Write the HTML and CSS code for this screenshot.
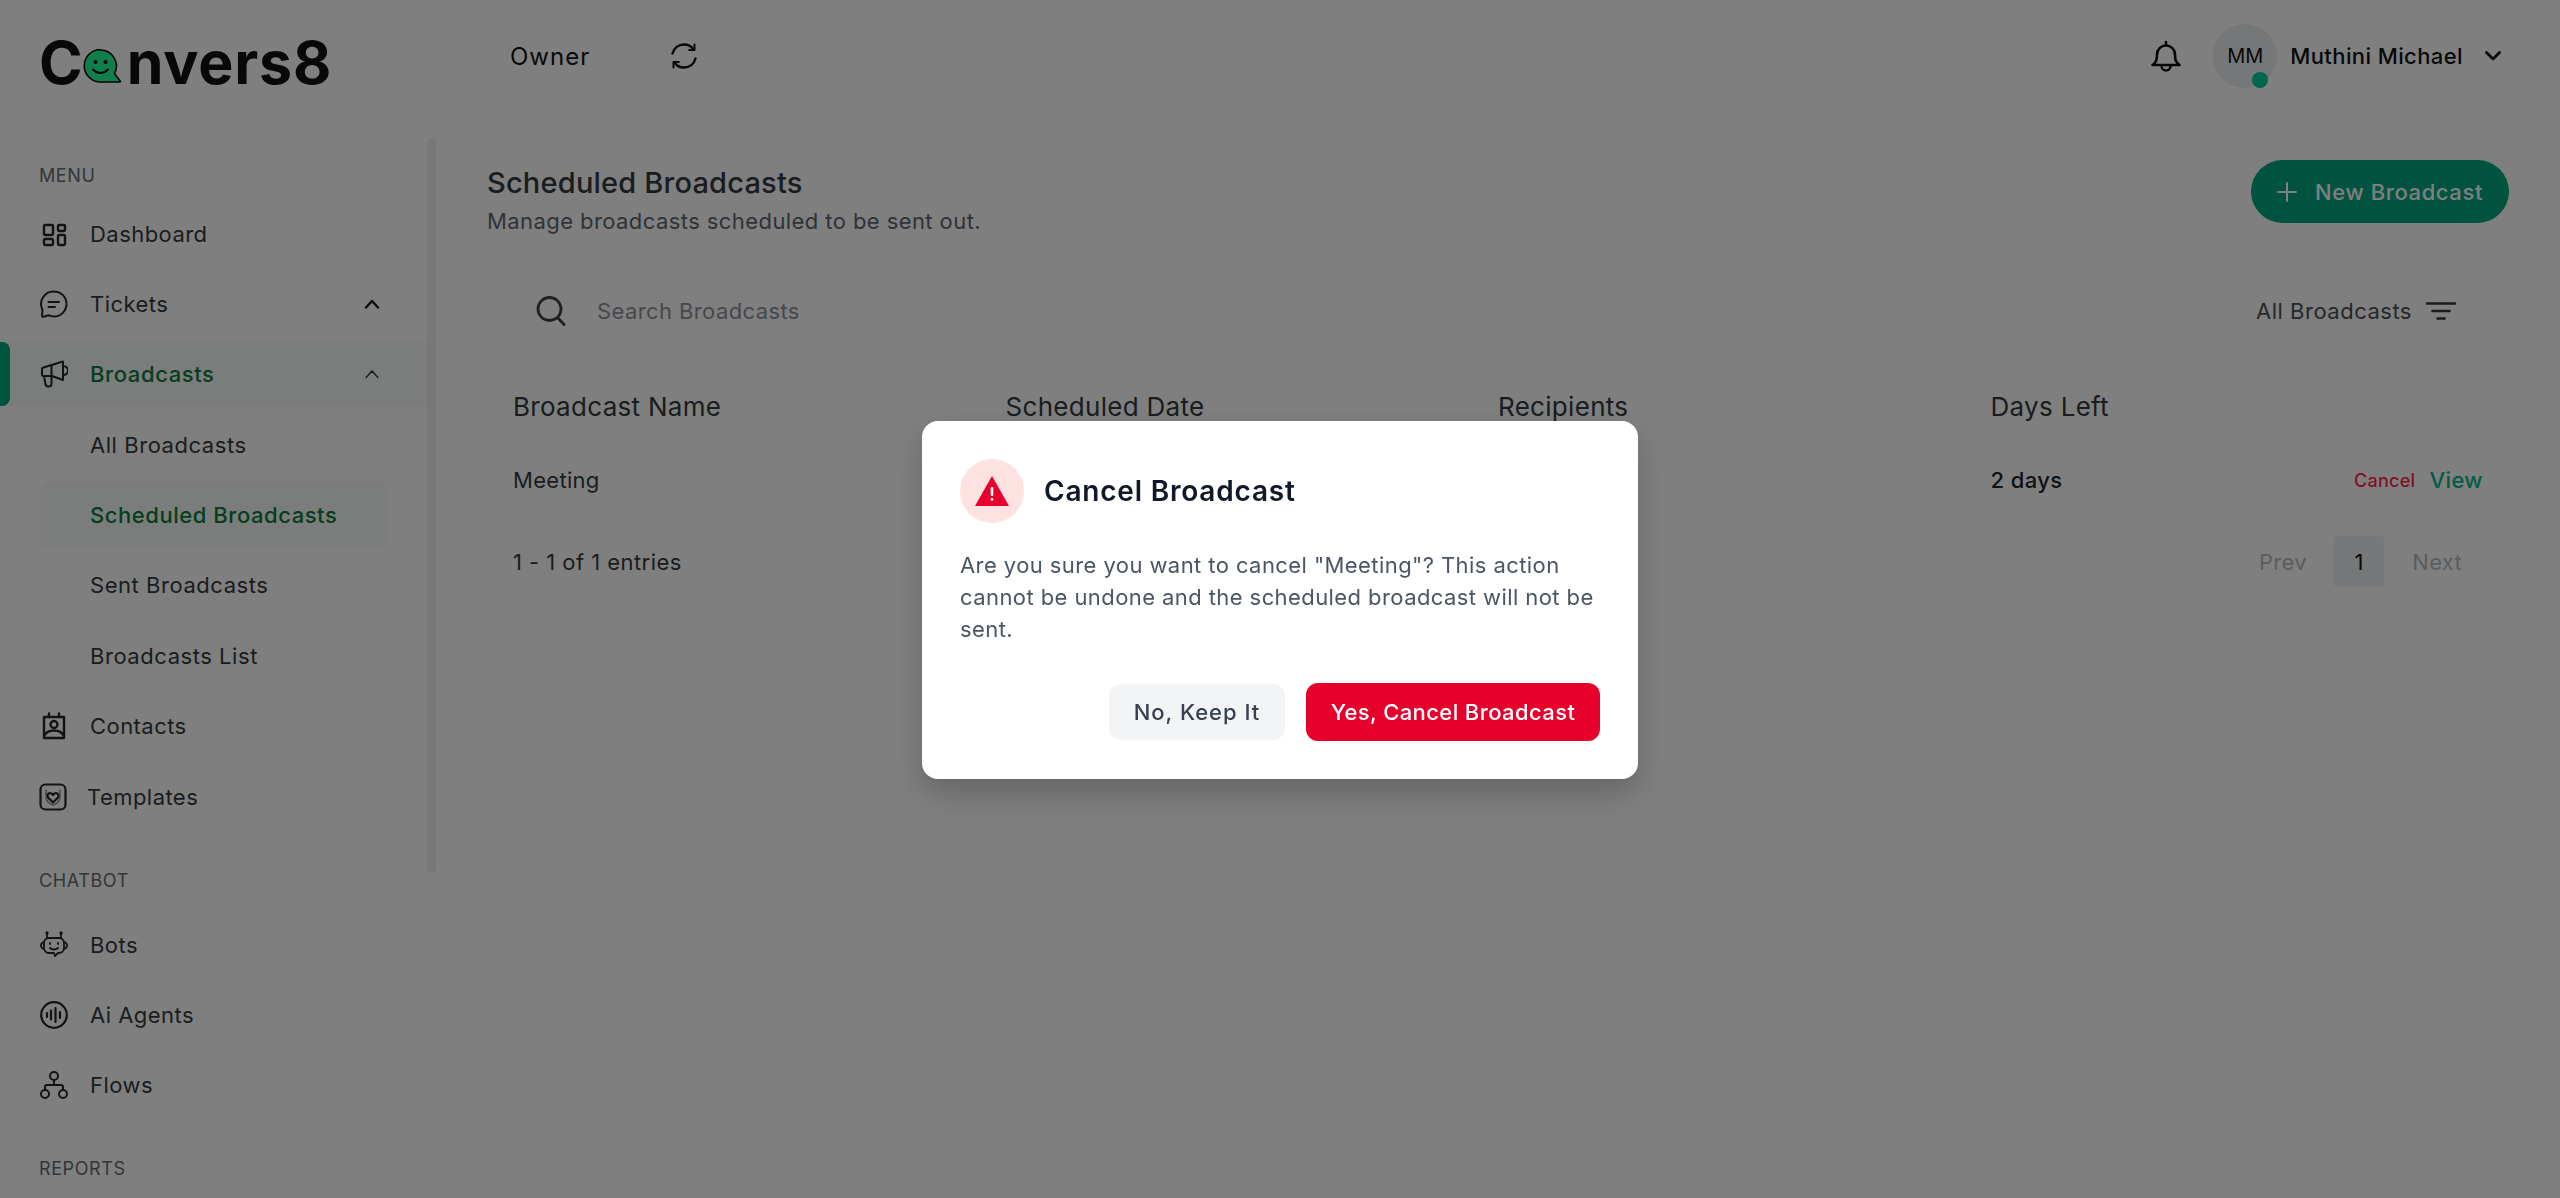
FILE: index.html
```html
<!DOCTYPE html>
<html lang="en">
<head>
<meta charset="utf-8">
<title>Scheduled Broadcasts</title>
<link rel="stylesheet" href="styles.css">
</head>
<body>
<div class="app">
  <header class="topbar">
    <div class="logo-cell">
      <div class="logo"><span class="logo-c">C</span><svg class="logo-mark" viewBox="0 0 38 34"><path d="M17 1a16 16 0 0 1 14 23.500l6 8-1 .5H17a16 16 0 0 1 0-32.500z" fill="#20ff96" stroke="#0a0a0a" stroke-width="1.600" stroke-linejoin="round"/><circle cx="12" cy="13" r="2" fill="#0a0a0a"/><circle cx="22" cy="13" r="2" fill="#0a0a0a"/><path d="M9.500 20.500c4 4.500 11 4.500 15 0" fill="none" stroke="#0a0a0a" stroke-width="2" stroke-linecap="round"/></svg><span class="logo-rest">nvers8</span></div>
    </div>
    <div class="role">Owner</div>
    <svg class="refresh" viewBox="0 0 28 28" fill="none" stroke="#111" stroke-width="2.400" stroke-linecap="round" stroke-linejoin="round"><path d="M2.500 11.500C4 6 8.500 2.500 14 2.500c4 0 7.500 2 9.500 5"/><path d="M24.500 2.500v5.500h-5.500" stroke-width="2"/><path d="M25.500 16.500C24 22 19.500 25.500 14 25.500c-4 0-7.500-2-9.500-5"/><path d="M3.500 25.500V20h5.500" stroke-width="2"/></svg>
    <div class="top-spacer"></div>
    <svg class="bell" viewBox="0 0 30 32" fill="none" stroke="#111" stroke-width="2.600" stroke-linecap="round" stroke-linejoin="round"><path d="M15 1.500v2.500"/><path d="M6 14a9 9 0 0 1 18 0c0 6 1 8 4.500 10.500h-27C5 22 6 20 6 14z"/><path d="M10.500 25.500a4.500 4.500 0 0 0 9 0"/></svg>
    <div class="avatar">MM<span class="status"></span></div>
    <div class="user-name">Muthini Michael</div>
    <svg class="user-chevron" viewBox="0 0 16 10" fill="none" stroke="#111" stroke-width="2.800" stroke-linecap="round" stroke-linejoin="round"><path d="M1.500 1.500 8 8l6.500-6.500"/></svg>
  </header>

  <div class="body-row">
    <aside class="sidebar">
      <span class="scroll-thumb"></span>
      <div class="side-label side-label-first">MENU</div>
      <nav class="side-group">
        <a class="side-item"><svg class="side-icon" viewBox="0 0 28 28" fill="none" stroke="#22262b" stroke-width="2.400" stroke-linejoin="round"><rect x="4" y="5" width="9" height="10" rx="1.200"/><rect x="18" y="5" width="7" height="6" rx="1.200"/><rect x="4" y="19" width="9" height="6" rx="1.200"/><rect x="18" y="15" width="7" height="10" rx="1.200"/></svg><span>Dashboard</span><svg class="side-chevron hidden-chevron" viewBox="0 0 16 10"></svg></a>
        <a class="side-item"><svg class="side-icon" viewBox="0 0 28 28" fill="none" stroke="#22262b" stroke-width="2" stroke-linecap="round" stroke-linejoin="round"><path d="M14 1.500a12.500 12.500 0 0 1 0 25c-2 0-4-.5-5.500-1.300l-5 1.500c-1 .2-1.500-.2-1.500-1l.5-6A12.500 12.500 0 0 1 14 1.500z"/><path d="M8.500 12H19M8.500 17H15"/></svg><span>Tickets</span><svg class="side-chevron" viewBox="0 0 16 10" fill="none" stroke="#15181c" stroke-width="2.400" stroke-linecap="round" stroke-linejoin="round"><path d="M2 8.500 8 2l6 6.500"/></svg></a>
        <a class="side-item side-item-active"><svg class="side-icon" viewBox="0 0 28 28" fill="none" stroke="#22262b" stroke-width="2" stroke-linecap="round" stroke-linejoin="round"><path d="M3.500 7.500 23 1.500V20L12 16H3.500C2.500 16 2 15.500 2 14.500V9c0-1 .5-1.500 1.500-1.500z"/><path d="M23 6c3 0 5 2 5 4.500S26 15 23 15"/><path d="M4 16l1.500 8c.2 1.500 1.500 2.500 3 2.500s3-1 3-2.500V5"/></svg><span>Broadcasts</span><svg class="side-chevron" viewBox="0 0 16 10" fill="none" stroke="#2a2f34" stroke-width="1.300" stroke-linecap="round" stroke-linejoin="round"><path d="M2 8.500 8 2l6 6.500"/></svg></a>
        <a class="side-sub">All Broadcasts</a>
        <a class="side-sub side-sub-active">Scheduled Broadcasts</a>
        <a class="side-sub">Sent Broadcasts</a>
        <a class="side-sub">Broadcasts List</a>
        <a class="side-item"><svg class="side-icon" viewBox="0 0 28 28" fill="none" stroke="#22262b" stroke-width="2.400" stroke-linecap="round" stroke-linejoin="round"><path d="M4 5h20v21H4z"/><path d="M9 1.500V5M19 1.500V5"/><circle cx="14" cy="12.500" r="3.500"/><path d="M4 24c2-4 5-5.500 10-5.500s8 1.500 10 5.500"/></svg><span>Contacts</span><svg class="side-chevron hidden-chevron" viewBox="0 0 16 10"></svg></a>
        <a class="side-item side-item-wide"><svg class="side-icon" viewBox="0 0 28 28" fill="none" stroke="#22262b" stroke-width="2.200" stroke-linecap="round" stroke-linejoin="round"><rect x="1.500" y="1.500" width="25" height="25" rx="5"/><path d="M7 7v6c0 5 3 8 7 9 4-1 7-4 7-9V7" stroke-width="1.400" opacity=".55"/><path d="M14 19.500l-4.500-4.500c-1.500-1.500-1.200-3.500 0-4.300s3-.4 4.500 1.300c1.500-1.700 3.300-2.100 4.500-1.300s1.500 2.800 0 4.300z"/></svg><span>Templates</span><svg class="side-chevron hidden-chevron" viewBox="0 0 16 10"></svg></a>
      </nav>
      <div class="side-label side-label-chatbot">CHATBOT</div>
      <nav class="side-group">
        <a class="side-item"><svg class="side-icon" viewBox="0 0 28 28" fill="none" stroke="#22262b" stroke-width="1.800" stroke-linecap="round" stroke-linejoin="round"><path d="M9 7h10a5 5 0 0 1 5 5v5a5 5 0 0 1-5 5h-1l-3 3-1-3H9a5 5 0 0 1-5-5v-5a5 5 0 0 1 5-5z"/><path d="M7 7 7 2M21 7V2"/><circle cx="7" cy="2" r=".8"/><circle cx="21" cy="2" r=".8"/><path d="M4 11c-2 .500-3 2-3 3.500S2 17.500 4 18M24 11c2 .500 3 2 3 3.500S26 17.500 24 18"/><path d="M10 12v1M18 12v1"/><path d="M10 17c2 2 6 2 8 0"/></svg><span>Bots</span><svg class="side-chevron hidden-chevron" viewBox="0 0 16 10"></svg></a>
        <a class="side-item"><svg class="side-icon" viewBox="0 0 28 28" fill="none" stroke="#22262b" stroke-width="2.200" stroke-linecap="round"><circle cx="14" cy="14" r="12.800"/><path d="M7 12v4M11 9.500v9M15.500 7v14M20 11v6"/></svg><span>Ai Agents</span><svg class="side-chevron hidden-chevron" viewBox="0 0 16 10"></svg></a>
        <a class="side-item"><svg class="side-icon" viewBox="0 0 28 28" fill="none" stroke="#22262b" stroke-width="2" stroke-linecap="round" stroke-linejoin="round"><circle cx="14" cy="5" r="4"/><circle cx="5" cy="23" r="4"/><circle cx="23" cy="23" r="4"/><path d="M14 9v5M5 19v-3a2 2 0 0 1 2-2h14a2 2 0 0 1 2 2v3"/></svg><span>Flows</span><svg class="side-chevron hidden-chevron" viewBox="0 0 16 10"></svg></a>
      </nav>
      <div class="side-label side-label-reports">REPORTS</div>
    </aside>

    <main class="main">
      <div class="page-head">
        <div class="page-titles">
          <h1 class="page-title">Scheduled Broadcasts</h1>
          <p class="page-sub">Manage broadcasts scheduled to be sent out.</p>
        </div>
        <button class="new-btn"><svg class="plus" viewBox="0 0 20 20" fill="none" stroke="#fff" stroke-width="2" stroke-linecap="round"><path d="M10 1v18M1 10h18"/></svg><span>New Broadcast</span></button>
      </div>
      <div class="filter-row">
        <svg class="search-icon" viewBox="0 0 30 30" fill="none" stroke="#3d4248" stroke-width="2.800" stroke-linecap="round"><circle cx="13.500" cy="13" r="11.500"/><path d="M22 22l6 6.500"/></svg>
        <span class="search-text">Search Broadcasts</span>
        <span class="filter-text">All Broadcasts</span>
        <svg class="filter-icon" viewBox="0 0 30 18" fill="none" stroke="#30343a" stroke-width="2.600" stroke-linecap="round"><path d="M1 1.500h28M6.500 9h17M11.500 16.500h7"/></svg>
      </div>
      <div class="table">
        <div class="t-head">
          <div>Broadcast Name</div><div>Scheduled Date</div><div>Recipients</div><div>Days Left</div>
        </div>
        <div class="t-row">
          <div>Meeting</div><div></div><div></div>
          <div class="t-last"><span class="days">2 days</span><span class="actions"><span class="act-cancel">Cancel</span><span class="act-view">View</span></span></div>
        </div>
        <div class="t-foot">
          <span class="entries">1 - 1 of 1 entries</span>
          <div class="pager"><span class="pg-off">Prev</span><span class="pg-num">1</span><span class="pg-off">Next</span></div>
        </div>
      </div>
    </main>
  </div>
</div>

<div class="backdrop">
  <div class="modal">
    <div class="modal-head">
      <div class="warn"><svg class="warn-icon" viewBox="0 0 34 30"><path d="M17 0 34 30H0z" fill="#e8002d"/><rect x="15.700" y="11" width="2.600" height="9" rx="1" fill="#fff"/><rect x="15.700" y="22" width="2.600" height="2.800" rx="1" fill="#fff"/></svg></div>
      <h2 class="modal-title">Cancel Broadcast</h2>
    </div>
    <p class="modal-text">Are you sure you want to cancel "Meeting"? This action<br>cannot be undone and the scheduled broadcast will not be<br>sent.</p>
    <div class="modal-actions">
      <button class="btn-keep">No, Keep It</button>
      <button class="btn-yes">Yes, Cancel Broadcast</button>
    </div>
  </div>
</div>
</body>
</html>
```
FILE: styles.css
```css
* { box-sizing: border-box; }
html, body { margin: 0; height: 100%; overflow: hidden; background: #fff; }
body { font-family: "Inter", "Liberation Sans", sans-serif; color: #343a40; font-size: 22px; }
.app { height: 1198px; display: flex; flex-direction: column; overflow: hidden; }

.topbar { height: 112px; flex: none; display: flex; align-items: center; padding-right: 59px; }
.logo-cell { width: 510px; flex: none; padding-left: 39px; padding-top: 14px; }
.logo { display: flex; align-items: center; font-weight: 700; font-size: 59px; line-height: 60px; color: #111; }
.logo-c { letter-spacing: -1px; }
.logo-mark { width: 39px; height: 34px; margin: 6px 5px 0 1px; }
.logo-rest { letter-spacing: .8px; }
.role { font-size: 24px; color: #111; width: 160px; letter-spacing: 1px; }
.refresh { width: 28px; height: 28px; }
.top-spacer { flex: 1; }
.bell { width: 30px; height: 33px; margin-right: 32px; }
.avatar { position: relative; width: 64px; height: 64px; border-radius: 50%; background: #eceef0; color: #111; display: flex; align-items: center; justify-content: center; font-size: 20px; margin-right: 13px; }
.status { position: absolute; left: 39px; top: 48px; width: 16px; height: 16px; border-radius: 50%; background: #00d09c; }
.user-name { font-size: 22px; font-weight: 500; color: #111; margin-right: 22px; letter-spacing: .4px; }
.user-chevron { width: 16px; height: 10px; }

.body-row { flex: 1; display: flex; min-height: 0; }
.sidebar { width: 438px; flex: none; position: relative; overflow: hidden; }
.scroll-thumb { position: absolute; left: 427px; top: 26px; width: 9px; height: 735px; background: #f0f0f0; border-radius: 5px; }
.side-label { height: 24px; margin-left: 39px; font-size: 18px; line-height: 24px; color: #666c73; letter-spacing: .6px; }
.side-label-first { margin-top: 52px; margin-bottom: 13.500px; }
.side-label-chatbot { margin-top: 40px; margin-bottom: 20px; }
.side-label-reports { margin-top: 40px; }
.side-group { display: flex; flex-direction: column; gap: 6.400px; }
.side-item { position: relative; height: 64px; margin-right: 11px; display: flex; align-items: center; padding-left: 40px; padding-right: 47px; color: #343a40; font-size: 22px; letter-spacing: .45px; }
.side-item > span { flex: 1; }
.side-icon { width: 28px; height: 28px; margin-right: 22px; flex: none; }
.side-chevron { width: 16px; height: 10px; flex: none; }
.hidden-chevron { visibility: hidden; }
.side-item-wide .side-icon { margin-left: -1px; margin-right: 20px; }
.side-item-active { color: #0b7a3d; background: #f7fbfa; font-weight: 500; letter-spacing: .6px; }
.side-item-active::before { content: ""; position: absolute; left: 0; top: 0; width: 10px; height: 64px; background: #00a87e; border-radius: 0 8px 8px 0; }
.side-sub { height: 64px; margin-left: 40px; margin-right: 50px; padding-left: 50px; display: flex; align-items: center; font-size: 22px; color: #343a40; letter-spacing: .55px; }
.side-sub-active { color: #0b7a3d; background: #f6fbfb; font-weight: 500; border-radius: 8px; }

.main { flex: 1; min-width: 0; padding: 48px 51px 0 49px; }
.page-head { display: flex; justify-content: space-between; align-items: flex-start; }
.page-titles { padding-top: 7px; }
.page-title { margin: 0; font-size: 29px; line-height: 32px; font-weight: 500; color: #343a40; letter-spacing: .2px; }
.page-sub { margin: 8px 0 0; font-size: 22px; line-height: 29px; color: #5f6670; letter-spacing: .42px; }
.new-btn { width: 258px; height: 63px; border: 0; border-radius: 32px; background: #00a87e; color: #fff; font: inherit; font-size: 22px; font-weight: 500; display: flex; align-items: center; justify-content: center; gap: 18px; letter-spacing: .6px; }
.plus { width: 20px; height: 20px; }
.filter-row { margin-top: 45px; height: 60px; display: flex; align-items: center; padding: 0 53px 0 49px; }
.search-icon { width: 30px; height: 30px; margin-right: 31px; }
.search-text { flex: 1; color: #8b9199; font-size: 22px; letter-spacing: .4px; }
.filter-text { font-size: 22px; color: #4a5058; margin-right: 14px; letter-spacing: .5px; }
.filter-icon { width: 30px; height: 18px; }
.table { padding: 0 26px; margin-top: 40px; }
.t-head, .t-row { display: grid; grid-template-columns: repeat(4, 1fr); align-items: center; height: 50px; }
.t-head { font-size: 26px; color: #343a40; letter-spacing: .3px; }
.t-row { margin-top: 24px; font-size: 22px; color: #343a40; letter-spacing: .3px; }
.t-last { display: flex; justify-content: space-between; align-items: center; }
.days { font-weight: 500; color: #212529; letter-spacing: .4px; }
.actions { display: flex; align-items: center; gap: 14px; }
.act-cancel { font-size: 18px; font-weight: 500; color: #ff1f50; letter-spacing: .3px; }
.act-view { font-size: 22px; font-weight: 500; color: #00b88a; letter-spacing: .4px; }
.t-foot { margin-top: 31px; height: 51px; display: flex; justify-content: space-between; align-items: center; font-size: 22px; color: #343a40; }
.entries { letter-spacing: .45px; }
.pager { display: flex; align-items: center; margin-right: 21px; }
.pg-off { color: #b5bbc1; font-size: 22px; letter-spacing: .3px; }
.pager .pg-off:first-child { width: 75px; text-align: left; }
.pager .pg-off:last-child { width: 78px; text-align: right; }
.pg-num { width: 50px; height: 51px; background: #eef0f2; color: #111; display: flex; align-items: center; justify-content: center; border-radius: 4px; }

.backdrop { position: fixed; inset: 0; padding-top: 2px; background: rgba(0, 0, 0, .5); display: flex; align-items: center; justify-content: center; }
.modal { width: 716px; height: 358px; background: #fff; border-radius: 16px; padding: 38px; box-shadow: 0 14px 30px rgba(0, 0, 0, .2); }
.modal-head { display: flex; align-items: center; gap: 20px; }
.warn { width: 64px; height: 64px; border-radius: 50%; background: #fee2e2; display: flex; align-items: center; justify-content: center; flex: none; }
.warn-icon { width: 34px; height: 30px; }
.modal-title { margin: 0; font-size: 28px; font-weight: 600; color: #111827; letter-spacing: .8px; }
.modal-text { margin: 26px 0 0; font-size: 22px; line-height: 32px; color: #4b5563; letter-spacing: .42px; }
.modal-actions { margin-top: 38px; display: flex; justify-content: flex-end; align-items: center; gap: 21px; }
.btn-keep, .btn-yes { font: inherit; border: 0; font-size: 22px; font-weight: 500; border-radius: 12px; padding: 0; }
.btn-keep { width: 176px; height: 56px; background: #f3f4f6; color: #374151; letter-spacing: 1px; }
.btn-yes { width: 294px; height: 58px; background: #e8002d; color: #fff; letter-spacing: .4px; }
```
